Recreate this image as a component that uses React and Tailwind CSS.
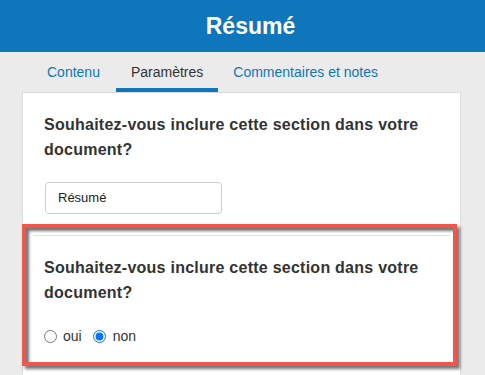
import React from "react";

export default function App() {
  const font = { fontFamily: '"Liberation Sans", Arial, sans-serif' };
  return (
    <div className="w-[485px] h-[375px] overflow-hidden bg-[#ebebeb]" style={font}>
      <header className="h-[52px] bg-[#0f76bc] flex items-center justify-center pl-[16px]">
        <h1 className="text-white font-bold text-[23px] leading-none">Résumé</h1>
      </header>
      <nav className="h-[40px] flex pl-[32px] text-[14px]">
        <div className="px-[15px] flex items-center text-[#0f76bc] border-b-4 border-transparent pt-[4px]">Contenu</div>
        <div className="px-[15px] flex items-center text-[#333] border-b-4 border-[#0f76bc] pt-[4px] ml-[1px]">Paramètres</div>
        <div className="px-[15px] flex items-center text-[#0f76bc] border-b-4 border-transparent pt-[4px]">Commentaires et notes</div>
      </nav>
      <div className="ml-[22px] w-[439px] h-[300px] bg-white border border-[#dcdcdc]">
        <div className="px-[21px] pt-[19px] pb-[10px]">
          <p className="text-[16px] leading-[25px] font-bold text-[#333] tracking-[0.25px]">
            Souhaitez-vous inclure cette section dans votre document?
          </p>
          <div className="mt-[20px] ml-[1px] w-[177px] h-[32px] border border-[#cccccc] rounded-[4px] flex items-center px-[12px] text-[13px] text-[#222]">
            Résumé
          </div>
        </div>
        <div className="ml-[-1px] w-[435px] h-[142px] border-4 border-[#f4554a] shadow-[3px_3px_3px_rgba(0,0,0,0.55),inset_3px_3px_3px_rgba(0,0,0,0.55)]">
          <div className="mt-[7px] ml-[7px] mr-[3px] h-px bg-[#e3e3e3]"></div>
          <div className="pl-[18px] pt-[19px]">
            <p className="text-[16px] leading-[25px] font-bold text-[#333] pr-[10px] tracking-[0.25px]">
              Souhaitez-vous inclure cette section dans votre document?
            </p>
            <div className="mt-[21px] flex items-center h-[20px] text-[14px] text-[#333]">
              <label className="flex items-center">
                <input type="radio" name="inc" className="m-0 w-[13px] h-[13px]" />
                <span className="ml-[6px]">oui</span>
              </label>
              <label className="flex items-center ml-[11px]">
                <input type="radio" name="inc" defaultChecked className="m-0 w-[13px] h-[13px]" />
                <span className="ml-[7px]">non</span>
              </label>
            </div>
          </div>
        </div>
      </div>
    </div>
  );
}
